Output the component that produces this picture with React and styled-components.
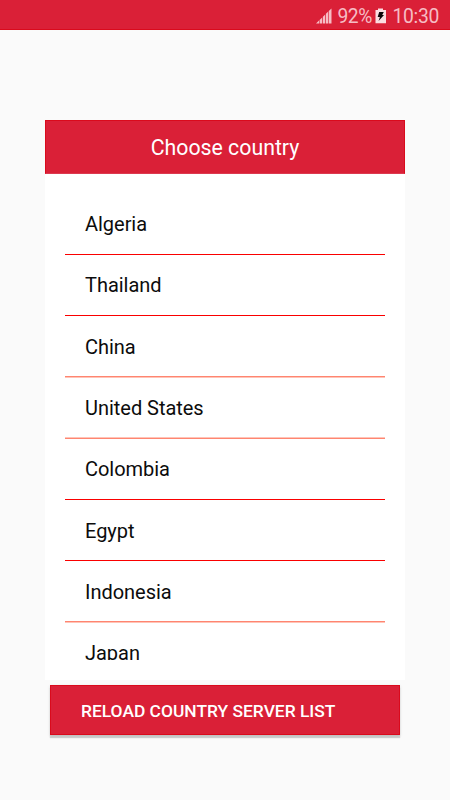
import { useState } from 'react';
import styled, { createGlobalStyle } from 'styled-components';

// height of each row, the two pixel rows its divider is made of
// and the nudge of its label
const countries = [
  { name: 'Algeria', height: 61, line: ['#fff', '#fa0000'], top: 0 },
  { name: 'Thailand', height: 61, line: ['#fff', '#fa0000'], top: 0 },
  { name: 'China', height: 62, line: ['#ff8570', '#ffc4b8'], top: 1 },
  { name: 'United States', height: 61, line: ['#ffc4b8', '#ff8570'], top: 0 },
  { name: 'Colombia', height: 61, line: ['#fff', '#fa0000'], top: 0 },
  { name: 'Egypt', height: 61, line: ['#fff', '#fa0000'], top: 1 },
  { name: 'Indonesia', height: 62, line: ['#ff8570', '#ffc4b8'], top: 1 },
  { name: 'Japan', height: 61, line: ['#fff', '#fa0000'], top: 0 },
];

function App() {
  const [selected, setSelected] = useState(null);

  return (
    <Screen>
      <GlobalStyle />
      <StatusBar>
        <Signal />
        <Percent>92%</Percent>
        <Battery />
        <Clock>10:30</Clock>
      </StatusBar>
      <Dialog>
        <Title>Choose country</Title>
        <ListBox>
          <List>
            {countries.map((el) => (
              <Row
                key={el.name}
                $height={el.height}
                $line={el.line}
                $top={el.top}
                aria-selected={selected === el.name}
                onClick={() => setSelected(el.name)}
              >
                {el.name}
              </Row>
            ))}
          </List>
        </ListBox>
      </Dialog>
      <Reload onClick={() => setSelected(null)}>Reload country server list</Reload>
    </Screen>
  );
}

function Signal() {
  return (
    <SignalIcon width="16" height="16" viewBox="0 0 16 16" fill="#f6bcc4">
      <path d="M0 15.5 3 12.6V15.5Z" />
      <path d="M3.6 12 6.2 9.5V15.5H3.6Z" />
      <path d="M6.9 8.7 9.2 6.5V15.5H6.9Z" />
      <path d="M9.9 5.7 12.2 3.5V15.5H9.9Z" />
      <path d="M12.8 2.9 15.5.4V15.5H12.8Z" />
    </SignalIcon>
  );
}

function Battery() {
  return (
    <BatteryIcon width="12" height="16" viewBox="0 0 12 16">
      <path d="M3 .5H8V2H11V15.2H.5V2H3Z" fill="#fbdde1" />
      <path d="M4.2 4H8.8L7.2 7H9L3.6 13 4.9 9H2.7Z" fill="#0c0608" />
    </BatteryIcon>
  );
}

const GlobalStyle = createGlobalStyle`
  body {
    margin: 0;
    background: #fafafa;
    font-family: Roboto, "Liberation Sans", sans-serif;
  }
`;

const Screen = styled.div`
  height: 800px;
  display: flex;
  flex-direction: column;
  align-items: center;
  overflow: hidden;
  background: #fafafa;
`;

const StatusBar = styled.header`
  box-sizing: border-box;
  width: 100%;
  height: 30px;
  flex-shrink: 0;
  display: flex;
  justify-content: flex-end;
  padding-right: 11px;
  background: #da2037;
  border-bottom: 1px solid #da0a1c;
  color: #f6bcc4;
  font-size: 19.3px;
  line-height: 33px;
`;

const SignalIcon = styled.svg`
  margin: 8px 5px 0 0;
`;

const Percent = styled.span`
  width: 35px;
  letter-spacing: -0.5px;
`;

const BatteryIcon = styled.svg`
  margin: 8px 5px 0 3px;
`;

const Clock = styled.span`
  letter-spacing: -0.3px;
`;

const Dialog = styled.section`
  width: 360px;
  height: 560px;
  margin-top: 90px;
  flex-shrink: 0;
  background: #fff;
`;

const Title = styled.h1`
  box-sizing: border-box;
  height: 54px;
  margin: 0;
  background: #da2037;
  border: 1px solid #da0a1c;
  border-bottom-color: #dc3a50;
  color: #fff;
  font-size: 21.3px;
  font-weight: 400;
  line-height: 54px;
  text-align: center;
`;

const ListBox = styled.div`
  height: 486px;
  padding: 20px 20px 0;
  box-sizing: border-box;
  overflow: hidden;
`;

const List = styled.ul`
  height: 466px;
  margin: 0;
  padding: 0;
  overflow: hidden;
  list-style: none;
`;

const Row = styled.li`
  box-sizing: border-box;
  height: ${(p) => p.$height}px;
  padding: ${(p) => p.$top}px 0 0 20px;
  background: linear-gradient(
      ${(p) => p.$line[0]} 1px,
      ${(p) => p.$line[1]} 1px
    )
    left bottom / 100% 2px no-repeat;
  color: #0c0c0c;
  font-size: 20px;
  letter-spacing: -0.03px;
  line-height: 61px;
  cursor: pointer;
`;

const Reload = styled.button`
  width: 350px;
  height: 50px;
  margin-top: 5px;
  padding: 2px 0 0 30px;
  flex-shrink: 0;
  border: 1px solid #da0a1c;
  background: #da2037;
  box-shadow: 0 3px 1px rgba(0, 0, 0, 0.16), 0 1px 3px rgba(0, 0, 0, 0.12);
  color: #fff;
  font-family: inherit;
  font-size: 17.4px;
  font-weight: 500;
  text-align: left;
  text-transform: uppercase;
`;

export default App;
